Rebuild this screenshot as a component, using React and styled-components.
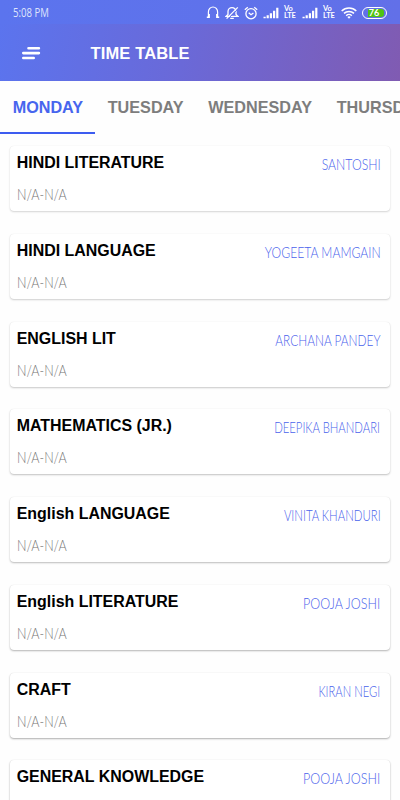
import React, { useState } from 'react';
import styled, { createGlobalStyle } from 'styled-components';

const days = [
  { name: 'MONDAY', width: 70 },
  { name: 'TUESDAY', width: 75.5 },
  { name: 'WEDNESDAY', width: 103.5 },
  { name: 'THURSDAY', width: 88 },
];

const lessons = [
  { subject: 'HINDI LITERATURE', teacher: 'SANTOSHI', stretch: 0.79 },
  { subject: 'HINDI LANGUAGE', teacher: 'YOGEETA MAMGAIN', stretch: 0.785 },
  { subject: 'ENGLISH LIT', teacher: 'ARCHANA PANDEY', stretch: 0.765 },
  { subject: 'MATHEMATICS (JR.)', teacher: 'DEEPIKA BHANDARI', stretch: 0.73 },
  { subject: 'English LANGUAGE', teacher: 'VINITA KHANDURI', stretch: 0.735 },
  { subject: 'English LITERATURE', teacher: 'POOJA JOSHI', stretch: 0.81 },
  { subject: 'CRAFT', teacher: 'KIRAN NEGI', stretch: 0.725 },
  { subject: 'GENERAL KNOWLEDGE', teacher: 'POOJA JOSHI', stretch: 0.81 },
];

const HeadphonesIcon = () => (
  <svg width="14" height="13" viewBox="0 0 14 13" fill="none" stroke="#fff">
    <path d="M2.4 11V6a4.6 5 0 0 1 9.2 0v5" strokeWidth="1.2" />
    <path d="M0.8 11.3h2.4V8M13.2 11.3h-2.4V8" strokeWidth="1.4" />
  </svg>
);

const MutedBellIcon = () => (
  <svg width="14" height="14" viewBox="0 0 14 14" fill="none" stroke="#fff" strokeWidth="1.3">
    <path d="M1.2 10.3h11.6L11 8.4V5.6a4 4 0 0 0-8 0v2.8zM5.2 12.3h3.6" />
    <path d="M3 12.9 13.4 2.5" stroke="#6070e8" strokeWidth="1" />
    <path d="M1.6 12.6 12.8 1.4" strokeWidth="1.3" />
  </svg>
);

const AlarmIcon = () => (
  <svg width="14" height="14" viewBox="0 0 14 14" fill="none" stroke="#fff" strokeWidth="1.3">
    <circle cx="7" cy="7.7" r="5.1" />
    <path d="M0.8 3.7 3.8 1.2M13.2 3.7 10.2 1.2M4.7 6.8 7 8.7l2.4-1.8" />
  </svg>
);

const SignalIcon = () => (
  <svg width="16" height="12" viewBox="0 0 16 12" fill="#fff">
    <path d="M0.5 9.7h2.2V11.2h-2.2zM3.6 8.2h2.2v3h-2.2zM6.8 6.2h2.2v5h-2.2zM10 3.7h2.2v7.5h-2.2zM13.2 0.7h2.2v10.5h-2.2z" />
  </svg>
);

const WifiIcon = () => (
  <svg width="16" height="12" viewBox="0 0 16 12" fill="none" stroke="#fff" strokeWidth="1.5">
    <path d="M0.7 4a10.5 10.5 0 0 1 14.6 0M3 6.4a7.2 7.2 0 0 1 10 0M5.2 8.7a4 4 0 0 1 5.6 0" />
    <path d="M6.3 10a2.5 2.5 0 0 1 3.4 0L8 11.8z" fill="#fff" stroke="none" />
  </svg>
);

const MenuIcon = () => (
  <svg width="20" height="14" viewBox="0 0 20 14" stroke="#fff" strokeWidth="2.6" strokeLinecap="round">
    <path d="M7.5 2.2h10.4M2.3 7.1h15.6M2.3 12h10.4" />
  </svg>
);

const VoLte = () => (
  <VoLteBox>
    <span>Vo</span>
    <span>LTE</span>
  </VoLteBox>
);

const Lesson = ({ subject, teacher, stretch, depth }) => (
  <LessonCard $depth={depth}>
    <LessonTop>
      <Subject>{subject}</Subject>
      <Teacher $stretch={stretch}>{teacher}</Teacher>
    </LessonTop>
    <Period>N/A-N/A</Period>
  </LessonCard>
);

const App = () => {
  const [selected, setSelected] = useState('MONDAY');

  return (
    <>
      <GlobalStyle />
      <Screen>
        <StatusBar>
          <Clock>5:08 PM</Clock>
          <StatusIcons>
            <HeadphonesIcon />
            <MutedBellIcon />
            <AlarmIcon />
            <SignalIcon />
            <VoLte />
            <SignalIcon />
            <VoLte />
            <WifiIcon />
            <Battery><BatteryLevel>76</BatteryLevel></Battery>
          </StatusIcons>
        </StatusBar>

        <Toolbar>
          <MenuButton aria-label="Menu"><MenuIcon /></MenuButton>
          <Title>TIME TABLE</Title>
        </Toolbar>

        <Tabs>
          {days.map(({ name, width }) => (
            <Tab key={name} $width={width} $active={name === selected} onClick={() => setSelected(name)}>
              {name}
            </Tab>
          ))}
        </Tabs>

        <LessonList>
          {lessons.map((lesson, i) => (
            <Lesson key={lesson.subject} {...lesson} depth={i} />
          ))}
        </LessonList>
      </Screen>
    </>
  );
};

const GlobalStyle = createGlobalStyle`
  * {
    box-sizing: border-box;
  }
  body {
    margin: 0;
    overflow: hidden;
    font-family: 'Liberation Sans', Arial, sans-serif;
  }
`;

const Screen = styled.div`
  width: 400px;
  height: 800px;
  display: flex;
  flex-direction: column;
  overflow: hidden;
  background: #fefefe;
`;

const StatusBar = styled.div`
  flex: none;
  height: 24px;
  display: flex;
  justify-content: space-between;
  align-items: center;
  padding: 1px 13px 0 13px;
  background: linear-gradient(90deg, #5b74ee, #6270e8);
`;

const Clock = styled.span`
  font-family: 'Open Sans', sans-serif;
  font-size: 12px;
  font-weight: 400;
  color: #dfe4fc;
  transform: scaleX(0.8);
  transform-origin: left;
`;

const StatusIcons = styled.div`
  display: flex;
  align-items: center;
  gap: 5px;
`;

const VoLteBox = styled.div`
  width: 13px;
  display: flex;
  flex-direction: column;
  font-family: Lato, sans-serif;
  font-size: 7.4px;
  line-height: 6.4px;
  font-weight: 700;
  color: #fff;
`;

const Battery = styled.div`
  width: 25px;
  height: 12px;
  display: flex;
  justify-content: center;
  border: 1.4px solid #fff;
  border-radius: 6px;
`;

const BatteryLevel = styled.div`
  width: 16px;
  margin: 1px 0 1px 3px;
  padding-right: 4px;
  border-radius: 0 3px 3px 0;
  background: #4fc314;
  color: #fff;
  font-family: Lato, sans-serif;
  font-size: 9px;
  line-height: 8px;
  font-weight: 700;
  text-align: center;
`;

const Toolbar = styled.header`
  flex: none;
  height: 57px;
  display: flex;
  align-items: center;
  padding-left: 21px;
  background: linear-gradient(100deg, #5b74ee 0%, #6a69d8 46%, #805bb2 100%);
`;

const MenuButton = styled.button`
  width: 20px;
  height: 14px;
  display: flex;
  padding: 0;
  border: 0;
  background: transparent;
`;

const Title = styled.h1`
  margin: 1px 0 0 49.5px;
  font-size: 16.5px;
  letter-spacing: 0.13px;
  font-weight: 700;
  color: #fff;
`;

const Tabs = styled.nav`
  flex: none;
  height: 53px;
  display: flex;
`;

const Tab = styled.button`
  flex: none;
  width: ${({ $width }) => $width + 25}px;
  padding: 2px 0 0 0.8px;
  border: 0;
  border-bottom: 2px solid ${({ $active }) => ($active ? '#3d5cf0' : 'transparent')};
  background: transparent;
  font-family: inherit;
  font-size: 16.2px;
  font-weight: 700;
  color: ${({ $active }) => ($active ? '#4765ee' : '#7d7d7d')};
`;

const LessonList = styled.main`
  display: flex;
  flex-direction: column;
  gap: 22.75px;
  padding: 12px 9.7px 0;
`;

const LessonCard = styled.article`
  flex: none;
  height: 65px;
  padding: 7px 10px 0 7px;
  border-radius: 4px;
  background: #fff;
  box-shadow: 0 1px 2px rgba(0, 0, 0, ${({ $depth }) => 0.16 + $depth * 0.025}), 0 0 1px rgba(0, 0, 0, 0.1);
`;

const LessonTop = styled.div`
  display: flex;
  justify-content: space-between;
`;

const Subject = styled.h2`
  margin: 0;
  font-size: 15.95px;
  line-height: 20px;
  font-weight: 700;
  color: #000;
`;

const Teacher = styled.span`
  font-family: Lato, sans-serif;
  font-size: 15.5px;
  line-height: 22px;
  font-weight: 300;
  color: #4a62ec;
  white-space: nowrap;
  transform: scaleX(${({ $stretch }) => $stretch});
  transform-origin: right;
`;

const Period = styled.div`
  margin-top: 9px;
  font-family: Lato, sans-serif;
  font-size: 15.5px;
  line-height: 20px;
  font-weight: 300;
  color: #757575;
  transform: scaleX(0.81);
  transform-origin: left;
`;

export default App;
